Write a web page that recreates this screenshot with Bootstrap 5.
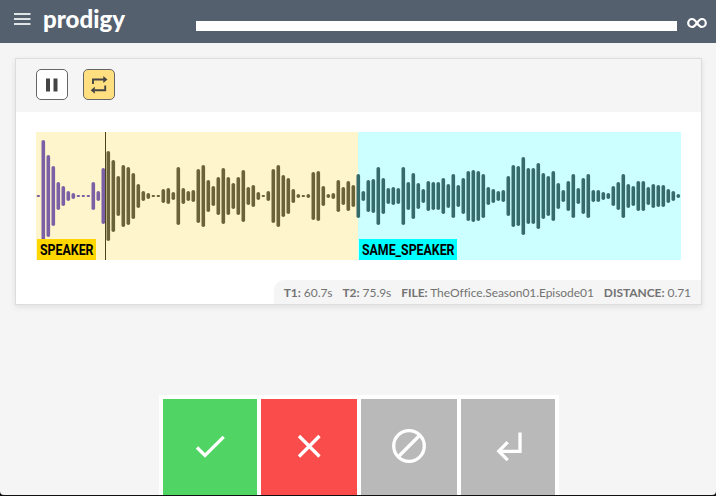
<!DOCTYPE html>
<html lang="en">
<head>
<meta charset="utf-8">
<meta name="viewport" content="width=device-width, initial-scale=1">
<title>Prodigy</title>
<link href="https://cdn.jsdelivr.net/npm/bootstrap@5.3.0/dist/css/bootstrap.min.css" rel="stylesheet">
<style>
body { font-family: Lato, sans-serif; background: #111; height: 496px; overflow: hidden; }
svg { display: block; }
.app { height: 495px; background: #f5f5f5; border-radius: 0 0 4px 4px; overflow: hidden; }
.topbar { height: 43px; background: #55606e; padding: 0 9px 0 14px; }
.menu-icon { margin-top: -5px; }
.brand-logo { margin-left: 10px; }
.track { margin: 9px 10px 0 68px; height: 10px; border-radius: 0; background: #fff; }
.infinity { margin-top: 3px; }
.task { margin: 15px 14px 0 15px; height: 247px; border: 1px solid #ddd; border-radius: 0; box-shadow: 0 2px 6px rgba(0,0,0,.09); }
.controls { height: 53px; padding: 10px 20px; gap: 15px; background: #f5f5f5; }
.control { width: 32px; height: 31px; padding: 0; border: 1px solid #666; border-radius: 5px; background: #fff; }
.control.looping { background: #ffdf80; }
.wave { margin: 20px 0 0 20px; }
.meta { height: 24px; padding: 0 10px; gap: 10px; background: #f5f5f5; color: #737373; font-size: 12px; line-height: 25px; letter-spacing: -.055px; border-top-left-radius: 10px; white-space: nowrap; }
.actions { width: 400px; height: 100px; padding: 4px 4px 0; gap: 4px; background: #fff; margin-left: 159px; }
.action { height: 96px; width: 94px; padding: 0; border: 0; border-radius: 0; }
.action.wide { width: 96px; }
.accept { background: #50d464; }
.reject { background: #fa4c4a; }
.neutral { background: #b9b9b9; }
</style>
</head>
<body>
<div class="app d-flex flex-column">
  <header class="topbar d-flex align-items-center flex-shrink-0">
    <svg class="menu-icon" width="17" height="12" fill="#dfe5e5"><path d="M0 0h16.500v2H0zM0 5h16.500v2H0zM0 10h16.500v2H0z"/></svg>
    <svg class="brand-logo" width="87" height="40"><text x="2" y="25.500" textLength="82" lengthAdjust="spacingAndGlyphs" font-size="25" font-weight="900" fill="#fff">prodigy</text></svg>
    <div class="track flex-grow-1"></div>
    <svg class="infinity" width="20" height="12" fill="none" stroke="#fff" stroke-width="2.200"><path d="M10 6C8 3.200 7 2 5.200 2a4 4 0 0 0 0 8C7 10 8 8.800 10 6s3-4 4.800-4a4 4 0 0 1 0 8C13 10 12 8.800 10 6z"/></svg>
  </header>

  <main class="task bg-white d-flex flex-column flex-shrink-0">
    <div class="controls d-flex">
      <button class="control btn d-flex align-items-center justify-content-center" aria-label="Pause"><svg width="12" height="14" fill="#444"><path d="M0 0.500h4v13H0zM7.500 0.500h4v13h-4z"/></svg></button>
      <button class="control looping btn d-flex align-items-center justify-content-center" aria-label="Loop"><svg width="18" height="18" fill="#444"><path d="M3 8V3.500h11M15.200 9.500v4.800H4.500" fill="none" stroke="#444" stroke-width="1.900"/><path d="M13.300 0l4.200 3.600-4.200 3.500zM4.800 10.700L.7 14.200l4.100 3.600z"/></svg></button>
    </div>
    <svg class="wave" width="645" height="128">
      <rect width="322" height="128" fill="#fff5cd"/>
      <rect x="322" width="323" height="128" fill="#ccffff"/>
      <g id="bars"></g>
      <path d="M69 0h1v128h-1z" fill="#4d4419"/>
      <rect x="1" y="107" width="59" height="21" fill="#ffd700"/>
      <rect x="323" y="107" width="98" height="21" fill="#00ffff"/>
      <g font-family="Roboto, sans-serif" font-size="14" font-weight="700" fill="#000">
        <text x="4" y="123" textLength="53.500" lengthAdjust="spacingAndGlyphs">SPEAKER</text>
        <text x="326" y="123" textLength="92.500" lengthAdjust="spacingAndGlyphs">SAME_SPEAKER</text>
      </g>
    </svg>
    <div class="meta d-flex mt-auto align-self-end">
      <span><b>T1:</b> 60.7s</span><span><b>T2:</b> 75.9s</span><span><b>FILE:</b> TheOffice.Season01.Episode01</span><span><b>DISTANCE:</b> 0.71</span>
    </div>
  </main>

  <div class="actions d-flex mt-auto flex-shrink-0">
    <button class="action accept btn d-flex align-items-center justify-content-center" aria-label="Accept"><svg width="94" height="96" fill="none" stroke="#fff" stroke-width="3.300"><path d="M34 48.500l8 8L60.700 37.800"/></svg></button>
    <button class="action wide reject btn d-flex align-items-center justify-content-center" aria-label="Reject"><svg width="96" height="96" fill="none" stroke="#fff" stroke-width="3.300"><path d="M38 37l20.500 20.500M58.500 37L38 57.500"/></svg></button>
    <button class="action wide neutral btn d-flex align-items-center justify-content-center" aria-label="Ignore"><svg width="96" height="96" fill="none" stroke="#fff" stroke-width="3.300"><circle cx="48" cy="47" r="15.300"/><path d="M37.500 57.500l21-21"/></svg></button>
    <button class="action neutral btn d-flex align-items-center justify-content-center" aria-label="Undo"><svg width="94" height="96" fill="none" stroke="#fff" stroke-width="3.300"><path d="M59 33.500v18.800H38M46.700 43.200L37.800 52.200l8.900 8.900"/></svg></button>
  </div>
</div>
<script src="https://cdn.jsdelivr.net/npm/bootstrap@5.3.0/dist/js/bootstrap.bundle.min.js"></script>
<script>
// Half height of every waveform bar, one bar per 5px
const levels = [1,56,41,30,14,10,5,3,1,1,1,14,5,28,45,36,20,31,29,23,12,5,3,1,1,7,8,4,29,8,5,6,27,
  31,16,10,19,28,19,13,19,26,9,11,4,1,5,27,31,21,18,7,2,1,2,24,25,10,2,3,16,9,15,11,22,
  5,16,17,29,18,8,9,8,29,14,23,13,7,15,14,14,18,12,22,11,18,25,26,25,22,9,7,5,6,20,31,30,
  39,28,28,33,23,20,25,13,6,15,22,8,18,22,6,6,4,3,10,14,22,12,10,15,15,9,12,11,11,7,5,2];
document.getElementById('bars').innerHTML = levels.map((h, i) => {
  const color = i < 14 ? '#7b60a6' : i < 64 ? '#6a6238' : '#356b6b';
  const w = h === 1 ? 3.4 : 3.6;
  return `<rect x="${(i * 5 + 2.3 - w / 2).toFixed(2)}" y="${64 - h}" width="${w}" height="${2 * h}" rx="${Math.min(h, 1.8)}" fill="${color}"/>`;
}).join('');
</script>
</body>
</html>
